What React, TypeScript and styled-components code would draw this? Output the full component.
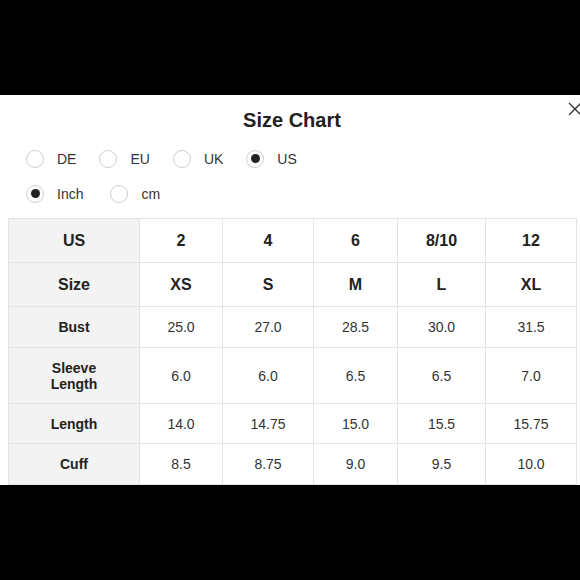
import React, { useState } from 'react';
import styled, { createGlobalStyle } from 'styled-components';

const GlobalStyle = createGlobalStyle`
  html, body {
    margin: 0;
    padding: 0;
    background: #000;
  }
  * {
    box-sizing: border-box;
  }
`;

const Page = styled.div`
  width: 580px;
  height: 580px;
  background: #000;
  display: flex;
  flex-direction: column;
  font-family: 'Liberation Sans', Arial, sans-serif;
  overflow: hidden;
`;

const Band = styled.div`
  height: 95px;
  flex-shrink: 0;
`;

const Panel = styled.div`
  position: relative;
  height: 390px;
  flex-shrink: 0;
  background: #fff;
  overflow: hidden;
`;

const Title = styled.h2`
  margin: 0;
  padding-top: 13px;
  text-align: center;
  font-size: 20px;
  line-height: 24px;
  font-weight: 700;
  color: #222;
  padding-left: 4px;
`;

const Close = styled.button`
  position: absolute;
  left: 568px;
  top: 7px;
  width: 14px;
  height: 14px;
  padding: 0;
  border: 0;
  background: none;
  cursor: pointer;
`;

const Options = styled.div`
  margin-top: 9px;
  padding-left: 26px;
  display: flex;
  flex-direction: column;
`;

const OptionRow = styled.div<{ $gap: number }>`
  height: 35px;
  display: flex;
  align-items: center;
  gap: ${(p) => p.$gap}px;
`;

const Option = styled.label`
  display: flex;
  align-items: center;
  gap: 13px;
  font-size: 14px;
  color: #333;
  cursor: pointer;
`;

const Radio = styled.span<{ $checked: boolean }>`
  width: 18px;
  height: 18px;
  border-radius: 50%;
  border: 1px solid #cfcfcf;
  display: flex;
  align-items: center;
  justify-content: center;

  &::after {
    content: '';
    width: 9px;
    height: 9px;
    border-radius: 50%;
    background: #222;
    display: ${(p) => (p.$checked ? 'block' : 'none')};
  }
`;

const Grid = styled.div`
  margin-top: 7px;
  margin-left: 8px;
  display: grid;
  grid-template-columns: 131px 83px 91px 84px 88px 91px;
  grid-template-rows: 44px 44px 41px 56px 40px 41px;
  border-top: 1px solid #e4e4e4;
  border-left: 1px solid #e4e4e4;
  width: 569px;
`;

const Cell = styled.div<{ $head?: boolean; $bold?: boolean; $large?: boolean }>`
  display: flex;
  align-items: center;
  justify-content: center;
  text-align: center;
  border-right: 1px solid #e4e4e4;
  border-bottom: 1px solid #e4e4e4;
  background: ${(p) => (p.$head ? '#f3f3f3' : '#fff')};
  color: ${(p) => (p.$bold ? '#222' : '#333')};
  font-weight: ${(p) => (p.$bold ? 700 : 400)};
  font-size: ${(p) => (p.$large ? '16px' : '14px')};
  line-height: 16px;
`;

const systems = ['DE', 'EU', 'UK', 'US'];
const units = ['Inch', 'cm'];

const rows: { label: string; values: string[]; bold?: boolean; large?: boolean }[] = [
  { label: 'US', values: ['2', '4', '6', '8/10', '12'], bold: true, large: true },
  { label: 'Size', values: ['XS', 'S', 'M', 'L', 'XL'], bold: true, large: true },
  { label: 'Bust', values: ['25.0', '27.0', '28.5', '30.0', '31.5'] },
  { label: 'Sleeve\nLength', values: ['6.0', '6.0', '6.5', '6.5', '7.0'] },
  { label: 'Length', values: ['14.0', '14.75', '15.0', '15.5', '15.75'] },
  { label: 'Cuff', values: ['8.5', '8.75', '9.0', '9.5', '10.0'] },
];

const App = () => {
  const [system, setSystem] = useState('US');
  const [unit, setUnit] = useState('Inch');

  return (
    <Page>
      <GlobalStyle />
      <Band />
      <Panel>
        <Title>Size Chart</Title>
        <Close aria-label='Close'>
          <svg width='14' height='14' viewBox='0 0 14 14'>
            <path d='M1 1 L13 13 M13 1 L1 13' stroke='#333' strokeWidth='1.3' fill='none' />
          </svg>
        </Close>
        <Options>
          <OptionRow $gap={23}>
            {systems.map((s) => (
              <Option key={s} onClick={() => setSystem(s)}>
                <Radio $checked={system === s} />
                {s}
              </Option>
            ))}
          </OptionRow>
          <OptionRow $gap={27}>
            {units.map((u) => (
              <Option key={u} onClick={() => setUnit(u)}>
                <Radio $checked={unit === u} />
                {u}
              </Option>
            ))}
          </OptionRow>
        </Options>
        <Grid>
          {rows.map((r) => (
            <React.Fragment key={r.label}>
              <Cell $head $bold $large={r.large}>
                <span>
                  {r.label.split('\n').map((line, i) => (
                    <React.Fragment key={line}>
                      {i > 0 && <br />}
                      {line}
                    </React.Fragment>
                  ))}
                </span>
              </Cell>
              {r.values.map((v, i) => (
                <Cell key={i} $bold={r.bold} $large={r.large}>
                  {v}
                </Cell>
              ))}
            </React.Fragment>
          ))}
        </Grid>
      </Panel>
    </Page>
  );
};

export default App;
